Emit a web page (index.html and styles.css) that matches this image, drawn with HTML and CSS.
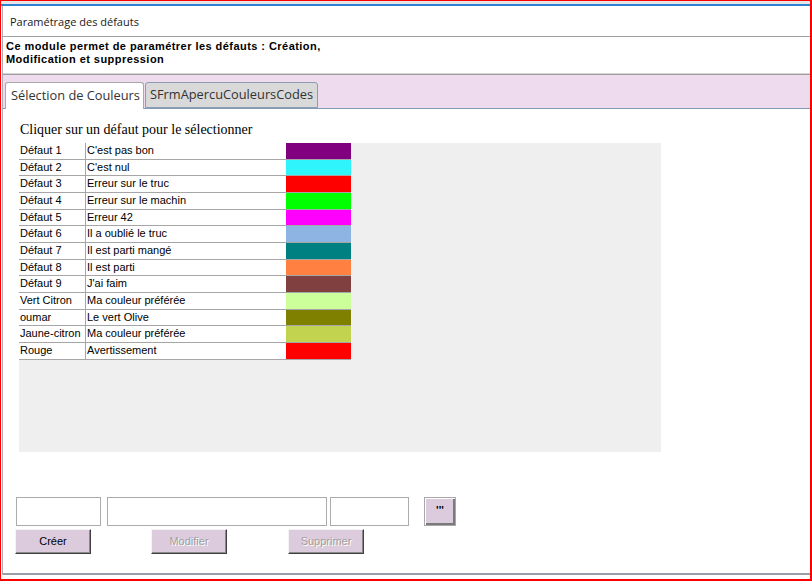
FILE: index.html
```html
<!DOCTYPE html>
<html lang="fr">
<head>
<meta charset="utf-8">
<title>Paramétrage des défauts</title>
<link rel="stylesheet" href="styles.css">
</head>
<body>
<div class="frame">
  <div class="topstrip"></div>
  <div class="window">
    <div class="title">Paramétrage des défauts</div>
    <div class="desc">
      <div class="desc-line">Ce module permet de paramétrer les défauts : Création,</div>
      <div class="desc-line">Modification et suppression</div>
    </div>
    <div class="tabstrip">
      <div class="tab active">Sélection de Couleurs</div>
      <div class="tab">SFrmApercuCouleursCodes</div>
    </div>
    <div class="content">
      <div class="heading">Cliquer sur un défaut pour le sélectionner</div>
      <div class="panel">
        <div class="grid">
          <div class="row"><div class="c1">Défaut 1</div><div class="c2">C'est pas bon</div><div class="c3" style="background:#800080"></div></div>
          <div class="row"><div class="c1">Défaut 2</div><div class="c2">C'est nul</div><div class="c3" style="background:#30f4fc"></div></div>
          <div class="row"><div class="c1">Défaut 3</div><div class="c2">Erreur sur le truc</div><div class="c3" style="background:#ff0000"></div></div>
          <div class="row"><div class="c1">Défaut 4</div><div class="c2">Erreur sur le machin</div><div class="c3" style="background:#00ff00"></div></div>
          <div class="row"><div class="c1">Défaut 5</div><div class="c2">Erreur 42</div><div class="c3" style="background:#ff00ff"></div></div>
          <div class="row"><div class="c1">Défaut 6</div><div class="c2">Il a oublié le truc</div><div class="c3" style="background:#8db4e2"></div></div>
          <div class="row"><div class="c1">Défaut 7</div><div class="c2">Il est parti mangé</div><div class="c3" style="background:#008080"></div></div>
          <div class="row"><div class="c1">Défaut 8</div><div class="c2">Il est parti</div><div class="c3" style="background:#ff8040"></div></div>
          <div class="row"><div class="c1">Défaut 9</div><div class="c2">J'ai faim</div><div class="c3" style="background:#804040"></div></div>
          <div class="row"><div class="c1">Vert Citron</div><div class="c2">Ma couleur préférée</div><div class="c3" style="background:#ccff99"></div></div>
          <div class="row"><div class="c1">oumar</div><div class="c2">Le vert Olive</div><div class="c3" style="background:#808000"></div></div>
          <div class="row"><div class="c1">Jaune-citron</div><div class="c2">Ma couleur préférée</div><div class="c3" style="background:#c2d350"></div></div>
          <div class="row"><div class="c1">Rouge</div><div class="c2">Avertissement</div><div class="c3" style="background:#ff0000"></div></div>
        </div>
      </div>
      <div class="fields">
        <div class="field f1"></div>
        <div class="field f2"></div>
        <div class="field f3"></div>
        <div class="dots">'''</div>
      </div>
      <div class="actions">
        <div class="btn">Créer</div>
        <div class="btn disabled">Modifier</div>
        <div class="btn disabled">Supprimer</div>
      </div>
    </div>
  </div>
</div>
</body>
</html>
```

FILE: styles.css
```css
html, body {
  margin: 0;
  padding: 0;
  background: #ffffff;
}
body {
  width: 812px;
  height: 581px;
  overflow: hidden;
}
.frame {
  box-sizing: border-box;
  width: 812px;
  height: 581px;
  border-top: 1px solid #ff0000;
  border-left: 1px solid #ff0000;
  border-right: 2px solid #ff0000;
  border-bottom: 2px solid #ff0000;
  display: flex;
  flex-direction: column;
  background: #ffffff;
}
.topstrip {
  height: 3px;
  background: #e6e6e6;
  border-bottom: 2px solid #2f80d0;
  flex: none;
}
.window {
  flex: 1;
  display: flex;
  flex-direction: column;
  margin-left: 1px;
  margin-bottom: 4px;
  border-left: 1px solid #a8acb8;
  min-height: 0;
}
.title {
  flex: none;
  height: 30px;
  border-bottom: 1px solid #a0a0a0;
  display: flex;
  align-items: center;
  padding-left: 7px;
  font-family: "Open Sans", "Liberation Sans", sans-serif;
  font-size: 11px;
  color: #1a1a1a;
}
.desc {
  flex: none;
  box-sizing: border-box;
  height: 37px;
  padding: 3px 0 0 3px;
  border-bottom: 1px solid #d4d4d4;
  font-family: "Liberation Sans", Arial, sans-serif;
  font-weight: bold;
  font-size: 11px;
  letter-spacing: 0.45px;
  color: #000000;
}
.desc-line {
  height: 13px;
  line-height: 13px;
  white-space: nowrap;
}
.tabstrip {
  flex: none;
  box-sizing: border-box;
  height: 35px;
  background: #eedcee;
  border-top: 1px solid #a0a0a0;
  border-bottom: 1px solid #7f9db9;
  display: flex;
  align-items: flex-end;
  padding-left: 2px;
}
.tab {
  box-sizing: border-box;
  height: 26px;
  width: 173px;
  margin-left: 1px;
  padding-left: 4px;
  background: #d9d9d9;
  border: 1px solid #8e9cb0;
  border-radius: 3px 3px 0 0;
  font-family: "Open Sans", "Liberation Sans", sans-serif;
  font-size: 12.8px;
  line-height: 22px;
  color: #333333;
  white-space: nowrap;
}
.tab.active {
  width: 139px;
  height: 27px;
  margin-left: 0;
  margin-bottom: -1px;
  padding-left: 5px;
  background: #ffffff;
  border-color: #a8a8a8;
  border-bottom: none;
  line-height: 24px;
}
.content {
  flex: 1;
  background: #ffffff;
  border-bottom: 2px solid #9a9ea8;
  padding: 13px 0 0 13px;
}
.heading {
  font-family: "Liberation Serif", "Times New Roman", serif;
  font-size: 14px;
  line-height: 16px;
  padding-left: 4px;
  margin-bottom: 5px;
  color: #000000;
}
.panel {
  width: 642px;
  height: 309px;
  margin-left: 3px;
  background: #efefef;
}
.grid {
  width: 332px;
  font-family: "Liberation Sans", Arial, sans-serif;
  font-size: 11px;
  color: #000000;
}
.row {
  display: grid;
  grid-template-columns: 67px 200px 65px;
  box-sizing: border-box;
  height: 16.66px;
  border-bottom: 1px solid #a6a6a6;
  background: #ffffff;
}
.c1 {
  border-right: 1px solid #a6a6a6;
  padding-left: 1px;
  line-height: 15.5px;
  white-space: nowrap;
  overflow: hidden;
}
.c2 {
  padding-left: 1px;
  line-height: 15.5px;
  white-space: nowrap;
}
.fields {
  display: flex;
  margin-top: 45px;
  height: 29px;
}
.field {
  box-sizing: border-box;
  height: 29px;
  border: 1px solid #ababab;
  background: #ffffff;
}
.f1 { width: 85px; }
.f2 { width: 220px; margin-left: 6px; }
.f3 { width: 79px; margin-left: 3px; }
.dots {
  box-sizing: border-box;
  width: 32px;
  height: 29px;
  margin-left: 15px;
  background: #dccadd;
  border: 1px solid #a8a8a8;
  box-shadow: inset 1px 1px 0 #ffffff, inset -2px -2px 0 #7a7a7a;
  font-family: "Liberation Sans", Arial, sans-serif;
  font-size: 11px;
  font-weight: bold;
  text-align: center;
  line-height: 24px;
  color: #000000;
}
.actions {
  display: flex;
  margin-top: 3px;
  margin-left: -1px;
}
.btn {
  box-sizing: border-box;
  width: 76px;
  height: 25px;
  background: #dccadd;
  border-top: 1px solid #f4f4f4;
  border-left: 1px solid #f4f4f4;
  border-right: 1px solid #404040;
  border-bottom: 1px solid #404040;
  box-shadow: inset -1px -1px 0 #8a8a8a;
  font-family: "Liberation Sans", Arial, sans-serif;
  font-size: 11px;
  line-height: 22px;
  text-align: center;
  color: #000000;
}
.btn + .btn {
  margin-left: 60px;
}
.btn + .btn + .btn {
  margin-left: 61px;
}
.btn.disabled {
  color: #a0a0a0;
  text-shadow: 1px 1px 0 #ffffff;
}
```
